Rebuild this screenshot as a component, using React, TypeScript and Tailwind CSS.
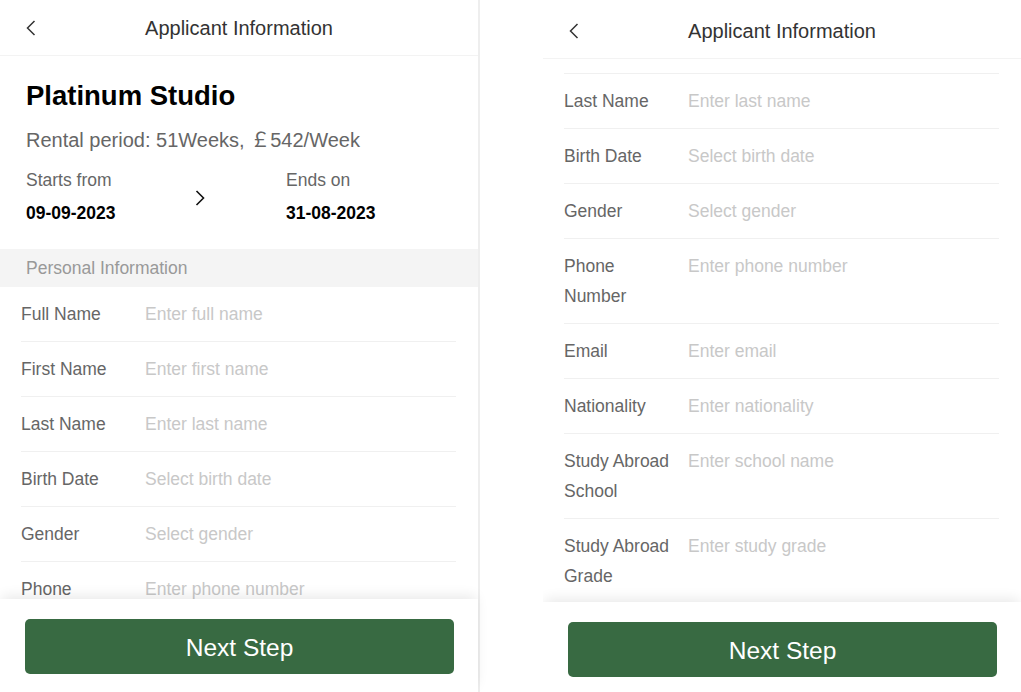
import React from "react";

const rows: { label: string; placeholder: string }[] = [
  { label: "Full Name", placeholder: "Enter full name" },
  { label: "First Name", placeholder: "Enter first name" },
  { label: "Last Name", placeholder: "Enter last name" },
  { label: "Birth Date", placeholder: "Select birth date" },
  { label: "Gender", placeholder: "Select gender" },
  { label: "Phone Number", placeholder: "Enter phone number" },
  { label: "Email", placeholder: "Enter email" },
  { label: "Nationality", placeholder: "Enter nationality" },
  { label: "Study Abroad School", placeholder: "Enter school name" },
  { label: "Study Abroad Grade", placeholder: "Enter study grade" },
];

function Content() {
  return (
    <div>
      <div className="pl-[26px] pr-[22px] pt-[22px] pb-[24px]">
        <div className="text-[27.5px] font-bold leading-[36px] text-black">Platinum Studio</div>
        <div className="mt-[10px] text-[20px] leading-[30px] text-[#666]">
          Rental period: 51Weeks, <span style={{ fontFamily: '"Noto Sans CJK SC", sans-serif' }} className="text-[20px]">￡</span>542/Week
        </div>
        <div className="mt-[13px] flex items-center">
          <div className="w-[164px]">
            <div className="text-[17.5px] leading-[24px] text-[#666]">Starts from</div>
            <div className="mt-[9px] text-[17.5px] font-bold leading-[24px] text-black">09-09-2023</div>
          </div>
          <div className="flex w-[20px] justify-center pt-[2px]">
            <svg width="10" height="16" viewBox="0 0 10 16" fill="none">
              <polyline points="1.5,1 8.5,8 1.5,15" stroke="#111" strokeWidth="1.6" />
            </svg>
          </div>
          <div className="ml-[76px]">
            <div className="text-[17.5px] leading-[24px] text-[#666]">Ends on</div>
            <div className="mt-[9px] text-[17.5px] font-bold leading-[24px] text-black">31-08-2023</div>
          </div>
        </div>
      </div>
      <div className="flex h-[38px] items-center bg-[#f4f4f4] pl-[26px] text-[17.5px] text-[#999]">
        Personal Information
      </div>
      <div className="ml-[21px] mr-[22px]">
        {rows.map((r) => (
          <div key={r.label} className="flex border-b border-[#f0f0f0] py-[12px]">
            <div className="w-[110px] text-[17.5px] leading-[30px] text-[#666]">{r.label}</div>
            <div className="ml-[14px] text-[17.5px] leading-[30px] text-[#c8c8c8]">{r.placeholder}</div>
          </div>
        ))}
      </div>
    </div>
  );
}

function Panel({ scrolled }: { scrolled?: boolean }) {
  return (
    <div className="flex h-[692px] w-[478px] shrink-0 flex-col bg-white">
      <div className="relative flex h-[56px] shrink-0 items-center justify-center border-b border-[#f3f3f3]">
        <div className="absolute left-[26px] top-[20px]">
          <svg width="10" height="16" viewBox="0 0 10 16" fill="none">
            <polyline points="8.5,1 1.5,8 8.5,15" stroke="#333" strokeWidth="1.5" />
          </svg>
        </div>
        <div className="text-[20px] text-[#333]">Applicant Information</div>
      </div>
      <div className="min-h-0 flex-1 overflow-hidden">
        <div className={scrolled ? "mt-[-326px]" : ""}>
          <Content />
        </div>
      </div>
      <div className="relative z-10 h-[93px] shrink-0 bg-white px-[25px] pt-[20px] shadow-[0_-5px_12px_-2px_rgba(0,0,0,0.09)]">
        <button className="flex h-[55px] w-[429px] items-center justify-center rounded-[5px] bg-[#386a42] pt-[3px] text-[24.5px] text-white">
          Next Step
        </button>
      </div>
    </div>
  );
}

export default function App() {
  return (
    <div
      className="flex h-[692px] w-[1021px] overflow-hidden bg-white"
      style={{ fontFamily: '"Liberation Sans", Arial, sans-serif' }}
    >
      <Panel />
      <div className="w-[2px] shrink-0 bg-[#eeeeee]" />
      <div className="w-[63px] shrink-0 bg-white" />
      <div className="h-[692px] w-[478px] shrink-0 overflow-hidden pt-[3px]">
        <Panel scrolled />
      </div>
    </div>
  );
}
